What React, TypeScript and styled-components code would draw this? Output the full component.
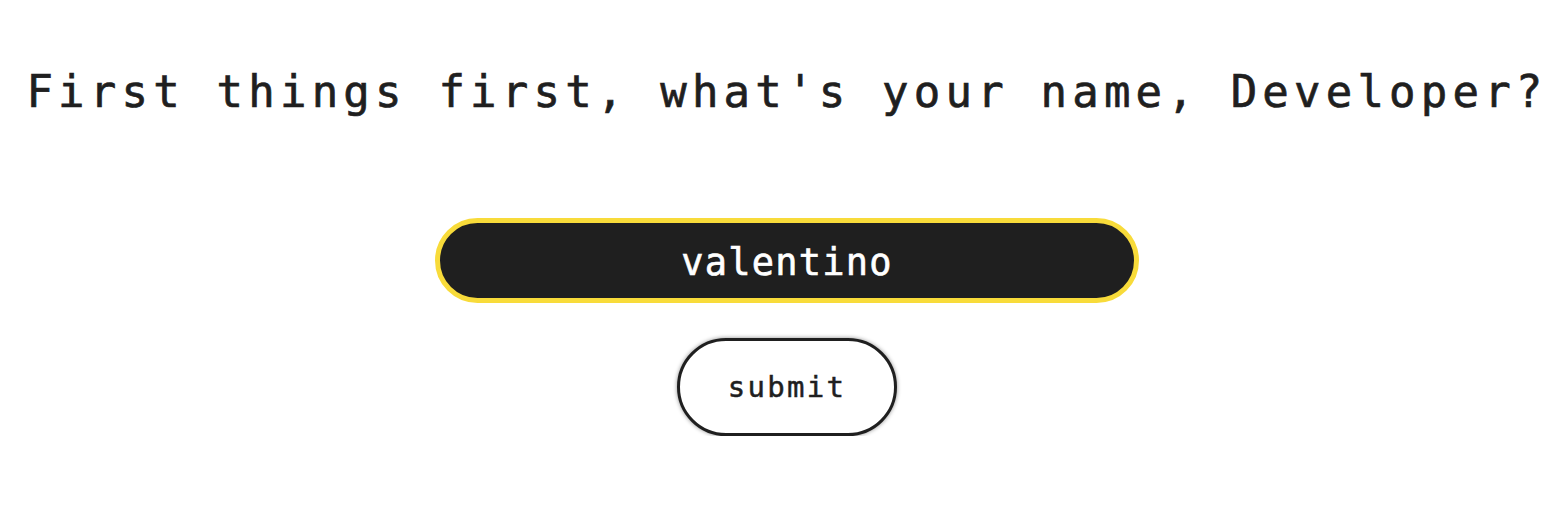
import styled, { createGlobalStyle } from "styled-components";

const GlobalStyle = createGlobalStyle`
  * {
    box-sizing: border-box;
  }
  body {
    margin: 0;
    background: #ffffff;
    font-family: "DejaVu Sans Mono", "Liberation Mono", monospace;
    color: #1f1f1f;
  }
`;

const Page = styled.main`
  display: flex;
  flex-direction: column;
  align-items: center;
  padding: 62px 0 0 8px;
`;

const Title = styled.h1`
  margin: 0;
  font-size: 44px;
  font-weight: 500;
  letter-spacing: 5.2px;
  line-height: 60px;
  white-space: nowrap;
  text-align: center;
  -webkit-text-stroke: 0.7px currentColor;
`;

const Form = styled.form`
  display: flex;
  flex-direction: column;
  align-items: center;
  gap: 35px;
  margin-top: 96px;
`;

const NameInput = styled.input`
  width: 704px;
  height: 85px;
  padding: 4px 0 0;
  border: 5px solid #f8db3a;
  border-radius: 43px;
  background: #1f1f1f;
  color: #ffffff;
  font-family: inherit;
  font-size: 37px;
  letter-spacing: 1.2px;
  text-align: center;
  outline: none;
  -webkit-text-stroke: 0.6px currentColor;
`;

const SubmitButton = styled.button`
  width: 220px;
  height: 98px;
  border: 3px solid #1f1f1f;
  border-radius: 49px;
  background: #ffffff;
  color: #1f1f1f;
  font-family: inherit;
  font-size: 29px;
  letter-spacing: 2.3px;
  box-shadow: 0 0 4px rgba(0, 0, 0, 0.45);
  cursor: pointer;
  -webkit-text-stroke: 0.5px currentColor;
`;

function App() {
  return (
    <>
      <GlobalStyle />
      <Page>
        <Title>First things first, what's your name, Developer?</Title>
        <Form onSubmit={(e) => e.preventDefault()}>
          <NameInput defaultValue="valentino" />
          <SubmitButton type="submit">submit</SubmitButton>
        </Form>
      </Page>
    </>
  );
}

export default App;
